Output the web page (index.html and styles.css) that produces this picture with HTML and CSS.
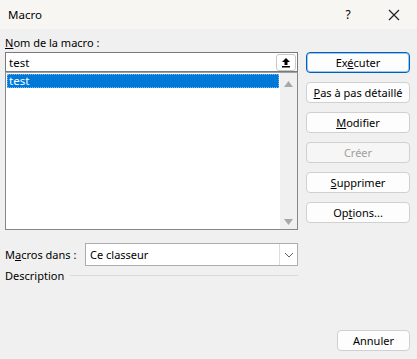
FILE: index.html
```html
<!DOCTYPE html>
<html lang="fr">
<head>
  <meta charset="UTF-8" />
  <title>Macro</title>
  <link rel="stylesheet" href="styles.css">
</head>
<body>
  <div class="dialog">
    <div class="titlebar">
      <span class="title">Macro</span>
      <span class="help">?</span>
      <span class="close">
        <svg width="12" height="12" viewBox="0 0 12 12"><path d="M1 1 L11 11 M11 1 L1 11" stroke="#222" stroke-width="1.2" fill="none"/></svg>
      </span>
    </div>

    <div class="content">
      <div class="left">
        <div class="label"><u>N</u>om de la macro :</div>
        <div class="name-input">
          <span>test</span>
          <span class="collapse-btn">
            <svg width="10" height="11" viewBox="0 0 10 11"><path d="M5 1 L9 5 L6.5 5 L6.5 8 L3.5 8 L3.5 5 L1 5 Z" fill="#000"/><rect x="1" y="9" width="8" height="1.5" fill="#000"/></svg>
          </span>
        </div>
        <div class="listbox">
          <div class="items">
            <div class="item selected">test</div>
          </div>
          <div class="scrollbar">
            <svg width="9" height="6" viewBox="0 0 9 6"><path d="M0 6 L4.5 0 L9 6 Z" fill="#a8a8a8"/></svg>
            <svg width="9" height="6" viewBox="0 0 9 6"><path d="M0 0 L9 0 L4.5 6 Z" fill="#a8a8a8"/></svg>
          </div>
        </div>
      </div>

      <div class="buttons">
        <button class="btn default">Ex<u>é</u>cuter</button>
        <button class="btn"><u>P</u>as à pas détaillé</button>
        <button class="btn"><u>M</u>odifier</button>
        <button class="btn disabled">Créer</button>
        <button class="btn"><u>S</u>upprimer</button>
        <button class="btn">Op<u>t</u>ions...</button>
      </div>
    </div>

    <div class="macros-in">
      <span class="label">M<u>a</u>cros dans :</span>
      <div class="combo">
        <span>Ce classeur</span>
        <span class="drop">
          <svg width="10" height="6" viewBox="0 0 10 6"><path d="M1 1 L5 5 L9 1" stroke="#606060" stroke-width="1" fill="none"/></svg>
        </span>
      </div>
    </div>

    <div class="description">
      <span>Description</span>
      <span class="rule"></span>
    </div>

    <div class="footer">
      <button class="btn cancel">Annuler</button>
    </div>
  </div>
</body>
</html>
```

FILE: styles.css
```css
* {
  box-sizing: border-box;
  margin: 0;
  padding: 0;
}

body {
  width: 417px;
  height: 359px;
  background-color: #f0f0f0;
  font-family: 'Noto Sans', 'Open Sans', sans-serif;
  font-size: 11px;
  color: #000;
}

.dialog {
  width: 417px;
  height: 359px;
  display: flex;
  flex-direction: column;
}

.titlebar {
  height: 29px;
  background-color: #f8f6f2;
  display: flex;
  align-items: center;
  padding-left: 8px;
}

.title {
  flex: 1;
  font-size: 11.5px;
}

.help {
  width: 46px;
  text-align: center;
  font-size: 12px;
}

.close {
  width: 46px;
  display: flex;
  justify-content: center;
}

.content {
  display: flex;
  padding: 7px 7px 0 5px;
  gap: 8px;
}

.left {
  width: 293px;
}

.label {
  height: 16px;
  line-height: 14px;
}

.name-input {
  height: 20px;
  background: #fff;
  border: 1px solid #7a7a7a;
  display: flex;
  align-items: center;
  justify-content: space-between;
  padding: 0 1px 0 3px;
  font-size: 11.5px;
}

.collapse-btn {
  width: 20px;
  height: 17px;
  border: 1px solid #c8c8c8;
  border-radius: 3px;
  display: flex;
  align-items: center;
  justify-content: center;
}

.listbox {
  height: 158px;
  background: #fff;
  border: 1px solid #828790;
  border-top-color: #a0a0a0;
  display: flex;
}

.items {
  flex: 1;
  padding: 1px;
}

.item {
  height: 14px;
  line-height: 13px;
  padding-left: 2px;
  font-size: 11.5px;
}

.item.selected {
  background: #0078d7;
  color: #fff;
  outline: 1px dotted #7eb4ea;
  outline-offset: -1px;
}

.scrollbar {
  width: 17px;
  background: #f0f0f0;
  display: flex;
  flex-direction: column;
  justify-content: space-between;
  align-items: center;
  padding: 8px 0 4px;
}

.buttons {
  flex: 1;
  display: flex;
  flex-direction: column;
  gap: 9px;
  padding-top: 16px;
}

.btn {
  height: 21px;
  background: #fdfdfd;
  border: 1px solid #d0d0d0;
  border-radius: 4px;
  font-family: inherit;
  font-size: 11px;
  color: #000;
}

.btn.default {
  border: 1px solid #005fb8;
  box-shadow: inset 0 0 0 1px #9cc6ee;
}

.btn.disabled {
  color: #a0a0a0;
  background: #f6f6f6;
}

.macros-in {
  display: flex;
  align-items: center;
  padding: 13px 0 0 5px;
}

.macros-in .label {
  width: 80px;
  height: auto;
}

.combo {
  width: 213px;
  height: 23px;
  background: #fff;
  border: 1px solid #adadad;
  display: flex;
  align-items: center;
  justify-content: space-between;
  padding-left: 4px;
}

.drop {
  width: 18px;
  height: 21px;
  border-left: 1px solid #dcdcdc;
  display: flex;
  align-items: center;
  justify-content: center;
}

.description {
  display: flex;
  align-items: center;
  gap: 6px;
  padding: 2px 0 0 5px;
  width: 298px;
}

.rule {
  flex: 1;
  height: 1px;
  background: #dadada;
}

.footer {
  margin-top: auto;
  display: flex;
  justify-content: flex-end;
  padding: 0 7px 8px 0;
}

.btn.cancel {
  width: 73px;
}
```
